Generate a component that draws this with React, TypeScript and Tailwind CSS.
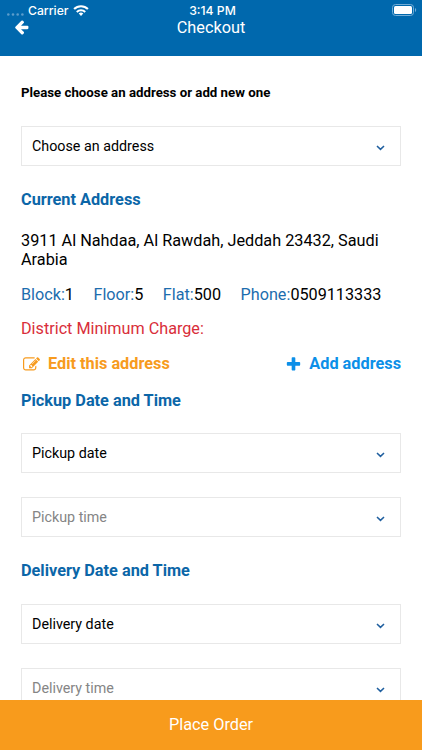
import { ReactNode } from 'react';

type FieldProps = {
  label: string;
  muted?: boolean;
  className?: string;
};

function SelectField({ label, muted, className = '' }: FieldProps) {
  return (
    <button
      type="button"
      className={`flex h-10 w-[380px] shrink-0 items-center justify-between border border-[#e8e8e8] pl-2.5 pr-[15px] text-[14.3px] leading-5 ${
        muted ? 'text-[#858585]' : 'text-black'
      } ${className}`}
    >
      <span>{label}</span>
      <svg className="mt-1 h-[6px] w-[9px]" viewBox="0 0 9 6" fill="none">
        <path d="M1 1l3.5 3.4L8 1" stroke="#1f5f9f" strokeWidth="1.5" />
      </svg>
    </button>
  );
}

function SectionTitle({ children }: { children: ReactNode }) {
  return (
    <h2 className="text-[16.3px] font-bold leading-5 text-[#0b66a8]">
      {children}
    </h2>
  );
}

function Detail({ name, value }: { name: string; value: string }) {
  return (
    <p>
      <span className="text-[#1c6dae]">{name}:</span>
      {value}
    </p>
  );
}

function StatusBar() {
  return (
    <div className="flex h-5 items-center pt-px font-[Inter,sans-serif] text-[12.2px] font-medium leading-5 text-white">
      <div className="flex flex-1 items-center pl-[7px]">
        <svg className="mt-2 h-[3px] w-[17px]" viewBox="0 0 17 3">
          <g fill="#5c9dcb">
            <circle cx="1.3" cy="1.5" r="1.3" />
            <circle cx="6" cy="1.5" r="1.3" />
            <circle cx="10.7" cy="1.5" r="1.3" />
            <circle cx="15.4" cy="1.5" r="1.3" />
          </g>
        </svg>
        <span className="ml-1">Carrier</span>
        <svg className="ml-[4px] h-[11px] w-4" viewBox="0 0 16 11" fill="none">
          <g stroke="#fff" strokeWidth="2.1">
            <path d="M1.1 4.1a9.8 9.8 0 0 1 13.8 0" />
            <path d="M3.8 6.9a6 6 0 0 1 8.4 0" />
          </g>
          <path d="M5.7 8.6a3.3 3.3 0 0 1 4.6 0L8 11z" fill="#fff" />
        </svg>
      </div>
      <span>3:14 PM</span>
      <div className="flex flex-1 justify-end pr-1">
        <svg className="-mt-px h-3 w-[26px]" viewBox="0 0 26 12" fill="none">
          <rect x="0.5" y="0.5" width="21" height="11" rx="3" stroke="#72add7" />
          <rect x="2" y="2" width="18" height="8" rx="1.5" fill="#fff" />
          <path d="M23 4v4c1.6-.7 1.6-3.3 0-4z" fill="#72add7" />
        </svg>
      </div>
    </div>
  );
}

export default function App() {
  return (
    <div className="flex h-[750px] w-[422px] flex-col overflow-hidden bg-white font-[Roboto,sans-serif] text-black">
      <header className="h-14 shrink-0 bg-[#0068ad]">
        <StatusBar />
        <div className="flex h-[15px] items-center px-[14px] text-white">
          <button type="button" className="w-4" aria-label="Back">
            <svg className="h-[15px] w-[15px]" viewBox="64 130 1664 1664" fill="currentColor">
              <path d="M1664 896v128q0 53-32.5 90.5t-84.5 37.5h-704l293 294q38 36 38 90t-38 90l-75 76q-37 37-90 37-52 0-91-37l-651-652q-37-37-37-90 0-52 37-91l651-650q38-38 91-38 52 0 90 38l75 74q38 38 38 91t-38 91l-293 293h704q52 0 84.5 37.5t32.5 90.5z" />
            </svg>
          </button>
          <h1 className="flex-1 pr-4 text-center text-[16.3px] leading-[15px]">
            Checkout
          </h1>
        </div>
      </header>

      <main className="flex min-h-0 flex-1 flex-col overflow-hidden pl-[21px] pr-5">
        <p className="mt-[27px] text-[13.25px] font-bold leading-5">
          Please choose an address or add new one
        </p>
        <SelectField label="Choose an address" className="mt-[23px]" />

        <div className="mt-6">
          <SectionTitle>Current Address</SectionTitle>
        </div>
        <p className="mt-[21px] text-[16.25px] leading-[19px]">
          3911 Al Nahdaa, Al Rawdah, Jeddah 23432, Saudi Arabia
        </p>
        <div className="mt-4 flex gap-[19.5px] text-[16.2px] leading-5">
          <Detail name="Block" value="1" />
          <Detail name="Floor" value="5" />
          <Detail name="Flat" value="500" />
          <Detail name="Phone" value="0509113333" />
        </div>
        <p className="mt-[14px] text-[16.2px] leading-5 text-[#d92e3a]">
          District Minimum Charge:
        </p>

        <div className="mt-[15px] flex items-center justify-between text-[16.3px] font-bold leading-5">
          <button type="button" className="flex items-center text-[#f79b1e]">
            <svg className="ml-[2px] mr-2 h-[17px] w-[17px]" viewBox="0 0 1792 1792" fill="currentColor">
              <path d="M888 1184l116-116-152-152-116 116v56h96v96h56zm440-720q-16-16-33 1l-350 350q-17 17-1 33t33-1l350-350q17-17 1-33zm80 594v190q0 119-84.5 203.5t-203.5 84.5h-832q-119 0-203.5-84.5t-84.5-203.5v-832q0-119 84.5-203.5t203.5-84.5h832q63 0 117 25 15 7 18 23 3 17-9 29l-49 49q-14 14-32 8-23-6-45-6h-832q-66 0-113 47t-47 113v832q0 66 47 113t113 47h832q66 0 113-47t47-113v-126q0-13 9-22l64-64q15-15 35-7t20 29zm-96-738l288 288-672 672h-288v-288zm444 132l-92 92-288-288 92-92q28-28 68-28t68 28l152 152q28 28 28 68t-28 68z" />
            </svg>
            Edit this address
          </button>
          <button type="button" className="mr-px flex items-center text-[#0c8fe8]">
            <svg className="mr-[7px] h-[17px] w-[17px]" viewBox="0 0 1792 1792" fill="currentColor">
              <path d="M1600 736v192q0 40-28 68t-68 28h-416v416q0 40-28 68t-68 28h-192q-40 0-68-28t-28-68v-416h-416q-40 0-68-28t-28-68v-192q0-40 28-68t68-28h416v-416q0-40 28-68t68-28h192q40 0 68 28t28 68v416h416q40 0 68 28t28 68z" />
            </svg>
            Add address
          </button>
        </div>

        <div className="mt-[17px]">
          <SectionTitle>Pickup Date and Time</SectionTitle>
        </div>
        <SelectField label="Pickup date" className="mt-[22px]" />
        <SelectField label="Pickup time" muted className="mt-6" />

        <div className="mt-6">
          <SectionTitle>Delivery Date and Time</SectionTitle>
        </div>
        <SelectField label="Delivery date" className="mt-[23px]" />
        <SelectField label="Delivery time" muted className="mt-6" />
      </main>

      <button
        type="button"
        className="h-[50px] shrink-0 bg-[#f89b1c] text-[16.3px] text-white"
      >
        Place Order
      </button>
    </div>
  );
}
